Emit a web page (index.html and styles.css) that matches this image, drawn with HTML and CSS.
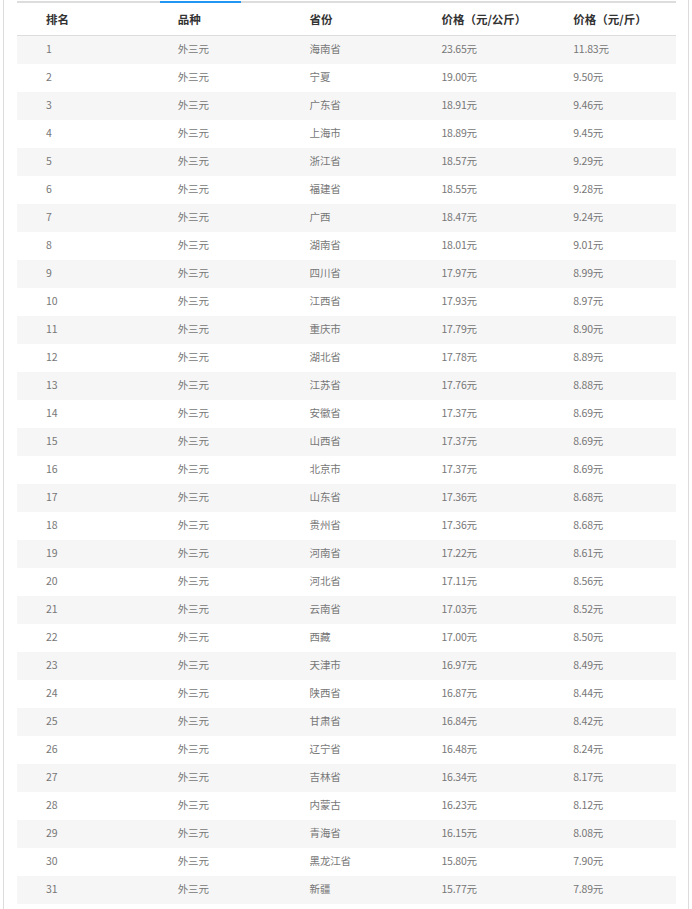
FILE: index.html
```html
<!DOCTYPE html>
<html lang="zh-CN">
<head>
<meta charset="utf-8">
<title>外三元价格排名</title>
<link rel="stylesheet" href="styles.css">
</head>
<body>
<div class="frame">
  <div class="panel">
    <div class="tabbar"><div class="tab-active"></div></div>
    <div class="rank">
      <div class="row head"><span>排名</span><span>品种</span><span>省份</span><span>价格（元/公斤）</span><span>价格（元/斤）</span></div>
      <div class="row"><span>1</span><span>外三元</span><span>海南省</span><span>23.65元</span><span>11.83元</span></div>
      <div class="row"><span>2</span><span>外三元</span><span>宁夏</span><span>19.00元</span><span>9.50元</span></div>
      <div class="row"><span>3</span><span>外三元</span><span>广东省</span><span>18.91元</span><span>9.46元</span></div>
      <div class="row"><span>4</span><span>外三元</span><span>上海市</span><span>18.89元</span><span>9.45元</span></div>
      <div class="row"><span>5</span><span>外三元</span><span>浙江省</span><span>18.57元</span><span>9.29元</span></div>
      <div class="row"><span>6</span><span>外三元</span><span>福建省</span><span>18.55元</span><span>9.28元</span></div>
      <div class="row"><span>7</span><span>外三元</span><span>广西</span><span>18.47元</span><span>9.24元</span></div>
      <div class="row"><span>8</span><span>外三元</span><span>湖南省</span><span>18.01元</span><span>9.01元</span></div>
      <div class="row"><span>9</span><span>外三元</span><span>四川省</span><span>17.97元</span><span>8.99元</span></div>
      <div class="row"><span>10</span><span>外三元</span><span>江西省</span><span>17.93元</span><span>8.97元</span></div>
      <div class="row"><span>11</span><span>外三元</span><span>重庆市</span><span>17.79元</span><span>8.90元</span></div>
      <div class="row"><span>12</span><span>外三元</span><span>湖北省</span><span>17.78元</span><span>8.89元</span></div>
      <div class="row"><span>13</span><span>外三元</span><span>江苏省</span><span>17.76元</span><span>8.88元</span></div>
      <div class="row"><span>14</span><span>外三元</span><span>安徽省</span><span>17.37元</span><span>8.69元</span></div>
      <div class="row"><span>15</span><span>外三元</span><span>山西省</span><span>17.37元</span><span>8.69元</span></div>
      <div class="row"><span>16</span><span>外三元</span><span>北京市</span><span>17.37元</span><span>8.69元</span></div>
      <div class="row"><span>17</span><span>外三元</span><span>山东省</span><span>17.36元</span><span>8.68元</span></div>
      <div class="row"><span>18</span><span>外三元</span><span>贵州省</span><span>17.36元</span><span>8.68元</span></div>
      <div class="row"><span>19</span><span>外三元</span><span>河南省</span><span>17.22元</span><span>8.61元</span></div>
      <div class="row"><span>20</span><span>外三元</span><span>河北省</span><span>17.11元</span><span>8.56元</span></div>
      <div class="row"><span>21</span><span>外三元</span><span>云南省</span><span>17.03元</span><span>8.52元</span></div>
      <div class="row"><span>22</span><span>外三元</span><span>西藏</span><span>17.00元</span><span>8.50元</span></div>
      <div class="row"><span>23</span><span>外三元</span><span>天津市</span><span>16.97元</span><span>8.49元</span></div>
      <div class="row"><span>24</span><span>外三元</span><span>陕西省</span><span>16.87元</span><span>8.44元</span></div>
      <div class="row"><span>25</span><span>外三元</span><span>甘肃省</span><span>16.84元</span><span>8.42元</span></div>
      <div class="row"><span>26</span><span>外三元</span><span>辽宁省</span><span>16.48元</span><span>8.24元</span></div>
      <div class="row"><span>27</span><span>外三元</span><span>吉林省</span><span>16.34元</span><span>8.17元</span></div>
      <div class="row"><span>28</span><span>外三元</span><span>内蒙古</span><span>16.23元</span><span>8.12元</span></div>
      <div class="row"><span>29</span><span>外三元</span><span>青海省</span><span>16.15元</span><span>8.08元</span></div>
      <div class="row"><span>30</span><span>外三元</span><span>黑龙江省</span><span>15.80元</span><span>7.90元</span></div>
      <div class="row"><span>31</span><span>外三元</span><span>新疆</span><span>15.77元</span><span>7.89元</span></div>
    </div>
  </div>
</div>
</body>
</html>
```
FILE: styles.css
```css
html, body {
  margin: 0;
  padding: 0;
  background: #fff;
}
body {
  font-family: "Noto Sans CJK SC", "Noto Sans", sans-serif;
  height: 909px;
  overflow: hidden;
}
.frame {
  margin: 0 3px;
  height: 909px;
  border-left: 1px solid #dcdcdc;
  border-right: 1px solid #dcdcdc;
  box-sizing: border-box;
  padding: 1px 12px 0 13px;
}
.panel {
  width: 659px;
}
.tabbar {
  height: 2px;
  background: #dddddd;
}
.tab-active {
  margin-left: 143px;
  width: 81px;
  height: 2px;
  background: #2196f3;
}
.rank {
  width: 659px;
}
.row {
  display: grid;
  grid-template-columns: repeat(5, 1fr);
  align-items: center;
  height: 28px;
  font-size: 10.5px;
  line-height: 14px;
  color: #777;
  letter-spacing: -0.2px;
}
.row span {
  padding-left: 29px;
  padding-bottom: 2px;
  white-space: nowrap;
}
.row:nth-child(even) {
  background: #f6f6f6;
}
.row.head {
  height: 32px;
  border-bottom: 1px solid #dddddd;
  font-size: 11.5px;
  font-weight: bold;
  color: #333;
  letter-spacing: 0;
}
.row.head span {
  padding-bottom: 1px;
}
```
